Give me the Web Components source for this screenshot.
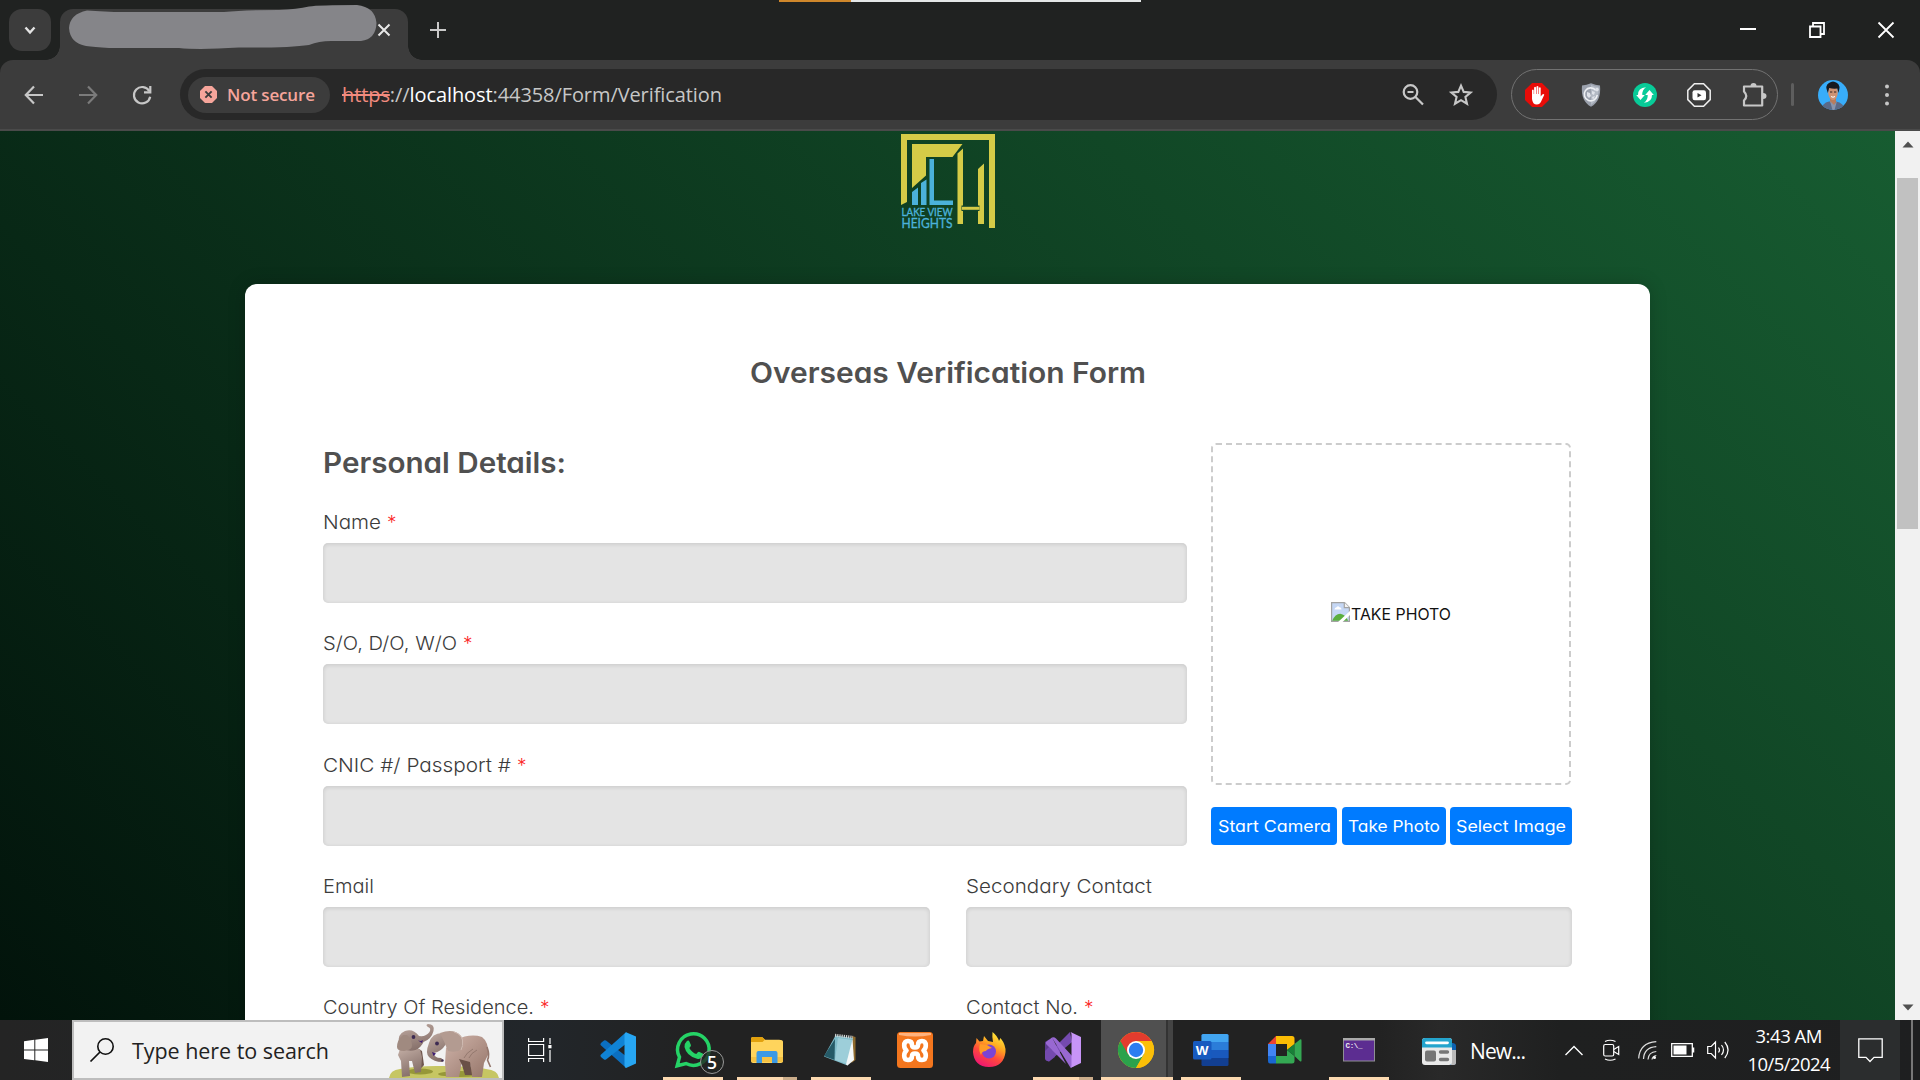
<!DOCTYPE html>
<html lang="en">
<head>
<meta charset="utf-8">
<title>Overseas Verification Form</title>
<style>
html,body{margin:0;padding:0}
body{width:1920px;height:1080px;overflow:hidden;background:#202221}
</style>
</head>
<body>
<desktop-screen></desktop-screen>
<script>
const ICONS = {
chevron:['24 24','<path d="M7.500 9.500l4.500 5 4.500-5" fill="none" stroke="#e3e3e3" stroke-width="2.400"/>'],
x:['14 14','<path d="M1.500 1.500l11 11M12.500 1.500l-11 11" stroke="#e8e8e8" stroke-width="2"/>'],
plus:['16 16','<path d="M8 0v16M0 8h16" stroke="#c9c9c9" stroke-width="2"/>'],
min:['16 16','<path d="M0 7h16" stroke="#fff" stroke-width="2"/>'],
restore:['16 16','<path d="M1 4.500h10.500V15H1zM4 4V1h11v11h-3" fill="none" stroke="#fff" stroke-width="1.800"/>'],
close:['16 16','<path d="M.5.5l15 15M15.500.5l-15 15" stroke="#fff" stroke-width="1.800"/>'],
back:['20 20','<path d="M10 1.500L1.800 10l8.200 8.500M2 10h17" fill="none" stroke="#c7c7c7" stroke-width="2.200"/>'],
fwd:['20 20','<path d="M10 1.500l8.200 8.500-8.200 8.500M18 10H1" fill="none" stroke="#7b7b7b" stroke-width="2.200"/>'],
reload:['20 20','<path d="M17.300 6.200A8.200 8.200 0 1 0 18.200 11.800" fill="none" stroke="#c7c7c7" stroke-width="2.200"/><path d="M18.300 1v6.300H12" fill="none" stroke="#c7c7c7" stroke-width="2.200"/>'],
danger:['18 18','<path d="M5.300 0h7.400L18 5.300v7.400L12.700 18H5.300L0 12.700V5.300z" fill="#f6a59b"/><path d="M5.700 5.700l6.600 6.600M12.300 5.700l-6.600 6.600" stroke="#3c3c3c" stroke-width="2"/>'],
zoomout:['22 22','<circle cx="8.500" cy="8" r="6.800" fill="none" stroke="#c7c7c7" stroke-width="2.200"/><path d="M5.500 8h6M13.500 13l7.500 7.500" stroke="#c7c7c7" stroke-width="2.200"/>'],
star:['24 24','<path d="M12 2.600l2.700 6.300 6.900.6-5.200 4.500 1.600 6.700-6-3.600-6 3.600L7.600 14 2.400 9.500l6.900-.6z" fill="none" stroke="#c7c7c7" stroke-width="2.100"/>'],
adblock:['24 24','<path d="M7.100 0h9.800L24 7.100v9.800L16.900 24H7.100L0 16.900V7.100z" fill="#e80c08"/><path d="M7 13V7.200q1-1.200 1.700 0V11l.4.1V4.400q1-1.200 1.900 0V11h.5V3.600q1-1.200 1.900 0V11h.5V4.800q1-1.100 1.800 0V13.500l1.600-2q1.300-1 2 0.200L16.800 17q-1.600 4.500-5 4.500Q7.600 21.500 7 16z" fill="#fff"/>'],
shield:['24 24','<path d="M12 .3q4.500 2 9 2.200Q22.500 18 12 23.800 1.500 18 3 2.500 7.500 2.300 12 .3z" fill="#9ba1ad"/><path d="M12 1.800q4 1.800 7.700 2Q20.500 17 12 22z" fill="#b4bac5"/><path d="M16.700 7.200A6.500 6.500 0 1 0 18.200 12" fill="none" stroke="#eef0f4" stroke-width="1.600"/><circle cx="18" cy="6.600" r="1.800" fill="#dfe2e9"/><path d="M8 9l3 1 1 3-2 2-2-2zM13 8l3 1-1 3-2-1zM13 14l3-1-2 4z" fill="#dfe2e9"/>'],
sync:['24 24','<circle cx="12" cy="12" r="12" fill="#08cb98"/><path d="M13 4.300Q4.800 5 5 12H3.200l4.300 5 4.300-5H9.300Q9 7 13 4.300zM11 19.700Q19.200 19 19 12h1.800l-4.300-5-4.300 5h2.500q.3 5-3.700 7.700z" fill="#fff"/>'],
ytblock:['24 24','<path d="M7.400.8h9.200l6.600 6.600v9.200l-6.600 6.600H7.400L.8 16.600V7.400z" fill="none" stroke="#efefef" stroke-width="1.500"/><rect x="5.500" y="7.300" width="13.500" height="10" rx="2.200" fill="#fff"/><path d="M10.500 10l4 2.300-4 2.300z" fill="#333"/>'],
puzzle:['26 26','<path d="M3 4.500h18.200v19H3v-5q4.500-4.500 0-9z" fill="none" stroke="#c7c7c7" stroke-width="2.200" stroke-linejoin="round"/><path d="M9.500 4q0-3 3-3t3 3zM22 11q3.500 0 3.500 3t-3.500 3z" fill="#c7c7c7"/>'],
avatar:['30 30','<clipPath id="a"><circle cx="15" cy="15" r="15"/></clipPath><g clip-path="url(#a)"><path d="M0 0h30v30H0z" fill="#38adfa"/><path d="M3 30q1-7 8-8.500h7q8 1.500 9 8.500z" fill="#5b6a88"/><path d="M12 16h6v6l-2 4-4-4z" fill="#b97d5e"/><path d="M12 21l2.500 9h2l2.500-9-3 4z" fill="#8995ad"/><ellipse cx="15" cy="12.500" rx="4.800" ry="7.500" fill="#cf9373"/><path d="M9.800 13Q6.500 5 11 3q4-3 8 0 4 2 1.400 10l-1-4.500q-4.500.5-8.200-.5z" fill="#171a20"/><path d="M12 12h2.300m1.700 0h2.300" stroke="#35231e"/><path d="M13 16.500q2 1.500 4 0" stroke="#fff" fill="none"/></g>'],
dots:['4 22','<g fill="#c7c7c7"><circle cx="2" cy="2.500" r="2"/><circle cx="2" cy="11" r="2"/><circle cx="2" cy="19.500" r="2"/></g>'],
logo:['94 95','<g fill="#d5cb47"><path d="M0 0h94v94h-6V6H6v62l-6 3z"/><path d="M11 10h50.500l-10 13H25v18.500L11 54z"/><path d="M56.500 19.500l5.500-5V90h-5.500zM77 35l6-5.500V90h-6z"/></g><path d="M60.500 71.500h18v5.500h-18z" fill="#10442a"/><path d="M61 72.800h17.500v3H61z" fill="#d5cb47"/><g fill="#4bb1da"><path d="M11 58l6-4.500V71h-6zM20 49l5.500-3.500V71H20zM28.500 25H33v41.500h19V71H28.500z"/><g font-family="Lato" stroke="#4bb1da" stroke-width=".35"><text x=".5" y="82" font-size="11" textLength="51" lengthAdjust="spacingAndGlyphs">LAKE VIEW</text><text x=".5" y="94.200" font-size="14" textLength="51" lengthAdjust="spacingAndGlyphs">HEIGHTS</text></g></g>'],
broken:['19 20','<path d="M.6.6h13l4.800 4.800V19.400H.6z" fill="#c5d7f5" stroke="#a3a3a3" stroke-width="1.200"/><path d="M13.300.6v5h5" fill="#f4f4f4" stroke="#a3a3a3" stroke-width="1.200"/><path d="M3.500 7.500q0-2 2-2.200 1.500-2 3 0 2 0 2 2.200z" fill="#fff"/><path d="M1.200 18.800q3-7 8-7 5 .5 8 7z" fill="#5aae3e"/><path d="M6.500 20.500L19.500 8.500v4L11 20.500z" fill="#fff"/>'],
up:['12 7','<path d="M6 .5L11.500 6.500H.5z" fill="#505050"/>'],
down:['12 7','<path d="M6 6.500L.5.5h11z" fill="#505050"/>'],
start:['24 24','<path d="M0 3.300L10.300 1.800V11.500H0zM11.300 1.700L24 0v11.500H11.300zM0 12.500h10.300v9.800L0 21zM11.300 12.500H24V24l-12.700-1.700z" fill="#fff"/>'],
search:['24 24','<circle cx="15.500" cy="8.500" r="7.700" fill="none" stroke="#111" stroke-width="1.600"/><path d="M10 14L.5 23.500" stroke="#111" stroke-width="1.700"/>'],
elephants:['116 56','<defs><linearGradient id="e" x2=".4" y2="1"><stop stop-color="#c2ada4"/><stop offset="1" stop-color="#86706a"/></linearGradient><linearGradient id="f" y2="1"><stop stop-color="#d0b4aa"/><stop offset="1" stop-color="#957569"/></linearGradient></defs><path d="M3 56q1-8 11-9 18-3.500 42-3 30 0 44 3 12 1 13 9z" fill="#c6c663"/><ellipse cx="34" cy="49.500" rx="13" ry="3" fill="#969739"/><ellipse cx="74" cy="52" rx="22" ry="3" fill="#969739"/><path d="M31 26l5 3 2 14-2.500 3-3.500-6z" fill="#6f574e"/><path d="M14 27l20 0 2 8-1 15-6 1-3-12-3 0 1 15-8 1-1-16-3-6z" fill="url(#e)"/><path d="M13 22Q11 12 19 9q8-3 14 5 7 1 10.500-4 2-4-1.500-5-3-2 0-3 7 0 5.500 7-2 8-10 11-2 5-8 8-10 3-16.500-6z" fill="url(#e)"/><path d="M17 13q-6 5-6 12 0 4 7 4 8-1 8-5 0-7-5-11z" fill="#a08a80"/><path d="M70 18q14-7 26-3 7 5 6 18l-4 8-2 14H86l-2-13-8-2-3 15H60l-1-14 1-15z" fill="url(#f)"/><path d="M73 37l11 3 2 13h-7l-3-10z" fill="#6a5047"/><path d="M101 25q3 8 .5 13l3 7" fill="none" stroke="#93766c" stroke-width="1.600"/><path d="M56 11Q46 11 43 21q-4 10 0 14 5 5 13 5 2-2-1-4-7 0-7-5 7-1 12-9z" fill="url(#e)"/><path d="M54 11Q68 6 75 14q4 9 1 13-5 4-14 2-4-10-8-18z" fill="#b39b91"/><path d="M68 10q7 2 8.500 8 1 6-1.500 10" fill="none" stroke="#d0bbb2"/><circle cx="27.500" cy="15" r="1.900" fill="#3d2b52"/><circle cx="51" cy="21.500" r="1.900" fill="#3d2b52"/><path d="M32 18.500q3 1 5-.5l-1 3zM46 30l4 1.500-2.500 2.500z" fill="#3e1d73"/><circle cx="56.500" cy="38.500" r="1.200" fill="#3d2b52"/><path d="M87 27q-7 4-9 9M91 28q-6 3-8 8" fill="none" stroke="#8c7167" stroke-width=".8"/>'],
taskview:['24 24','<g fill="none" stroke="#fff" stroke-width="1.200"><path d="M.6 0v3.500h15V0M.6 6.500h15v11H.6zM.6 24v-3.500h15V24M22 0v6M22 12v12"/></g><path d="M20.300 7h3.200v3.300h-3.200z" fill="#fff"/>'],
vscode:['36 36','<path d="M1.500 10.500L4 8.400q1-.6 2 .2L27 25v10.500l-3-1.500L.8 13.200q-1.300-1.200.7-2.700z" fill="#0b6fc0"/><path d="M1.500 25.500L4 27.600q1 .6 2-.2L27 11V.5l-3 1.500L.8 22.800q-1.300 1.200.7 2.700z" fill="#1083d4"/><path d="M26 .2L36 4.500v27L26 35.900q-1.500-.3-1.500-2.400v-31Q24.500.4 26 .2z" fill="#27a6f3"/>'],
whatsapp:['36 36','<path d="M2.200 33.800l2.300-8.700A15.800 15.800 0 1 1 11 31.500z" fill="none" stroke="#25d366" stroke-width="3.500"/><path d="M11.500 9.500q2-2 3 .2l1.500 3.500q0 1-1.700 2.800 2.700 4.700 7 6 1.800-2.300 2.700-2.200l4 2q1.200.6.300 2.500-2 3.400-6.300 2.500Q11.500 24 9.500 15q-.2-3.500 2-5.500z" fill="#25d366"/>'],
explorer:['36 36','<path d="M2 7q0-2 2-2h9l3 2.700h14q4 0 4 2V29q0 2-2 2H4q-2 0-2-2z" fill="#ffd45c"/><path d="M2 7q0-2 2-2h9l3 2.500L13.500 10H2z" fill="#e2a10d"/><path d="M2 25h32v5H4q-2 0-2-2z" fill="#f5c243"/><path d="M7.500 31V21q0-2 2-2h17q2 0 2 2v10h-5.500v-6H13v6z" fill="#3a99e4"/>'],
notepad:['36 36','<path d="M29 4l3.500 1v23l-4 3z" fill="#8f6a2c"/><path d="M12.500 3.500L30 6 24.500 33.500 1 24.500z" fill="#80bcca"/><path d="M12 7L1 24l10.500 4z" fill="#255a67"/><path d="M15 6L29 8l-4.500 24L12 28z" fill="#a4d2dc" opacity=".8"/><path d="M23 32.500L29.500 7l1.500 21-6.500 5.500z" fill="#f5f8f8"/><path d="M12 3.300l18 2" stroke="#cfd4d4" stroke-width="3" stroke-dasharray="1.200 1"/>'],
xampp:['36 36','<rect width="36" height="36" rx="3.500" fill="#f4761e"/><path d="M2 1h32v2q-16 3-32 0z" fill="#ffb27e"/><path d="M7.200 13.500Q7.200 9 11 9q4 0 4 4 0 2.500 3 2.500t3-2.500q0-4 4-4 3.800 0 3.800 4.500 0 3-2.300 5 2.300 2 2.300 5 0 4.500-3.800 4.500-4 0-4-4 0-2.500-3-2.500t-3 2.500q0 4-4 4-3.800 0-3.800-4.500 0-3 2.300-5-2.300-2-2.300-5z" fill="none" stroke="#fff" stroke-width="4.600" stroke-linejoin="round"/>'],
firefox:['36 36','<defs><linearGradient id="ff" x1=".8" y1="0" x2=".3" y2="1"><stop stop-color="#fff43f"/><stop offset=".38" stop-color="#ffa51f"/><stop offset=".65" stop-color="#ff4a3b"/><stop offset="1" stop-color="#ef1573"/></linearGradient></defs><path d="M21.500 0q5 4 6.500 9l1.500-3Q35 13 34.500 20 33 34.500 18 35 3 34.500 2 20q0-6 3-9l.5-5 3 3.500L12 9l1-5 4 5 5 1q-1-6-.5-10z" fill="url(#ff)"/><circle cx="18" cy="19.500" r="7" fill="#7b44d5"/><path d="M9 12l7 1 5 3q-5 1-6 3-4 0-5 4-3-5-1-11z" fill="#ff9b26"/>'],
vs:['36 36','<path d="M0 10l4-2.500 6 4.500v13l-6 4.500L0 27z" fill="#5d3b91"/><path d="M25 0L7 18 4 15 0 19v7q0 3 4 3.500L27 10z" fill="#744aaf"/><path d="M7 5.500L25.500 35.800 29 34V26L11 6.500Q9 4.500 7 5.500L1 10v2l20 20z" fill="#9868d2"/><path d="M25.500 0L36 5v26l-10.500 5q1-1 1-3V2.500q0-1.500-1-2.500z" fill="#c794f7"/>'],
chrome:['36 36','<circle cx="18" cy="18" r="18" fill="#fbbf08"/><path d="M18 18L2.400 9A18 18 0 0 0 18 36l8-14z" fill="#2ba24c"/><path d="M2.400 9A18 18 0 0 1 33.600 9H18l-7.800 13.500z" fill="#e33c2e"/><path d="M18 9h15.600A18 18 0 0 1 18 36l7.800-13.500z" fill="#fbbf08"/><circle cx="18" cy="18" r="9" fill="#fff"/><circle cx="18" cy="18" r="7.200" fill="#2c7df0"/>'],
word:['36 36','<rect x="8.500" y="2" width="27" height="32" rx="1.500" fill="#123f91"/><path d="M8.500 3.500Q8.500 2 10 2h24q1.500 0 1.500 1.500V10h-27z" fill="#42a5f0"/><path d="M8.500 10h27v8h-27z" fill="#2b7dd9"/><path d="M8.500 18h27v8h-27z" fill="#1959bd"/><rect x="0" y="9" width="18.500" height="18.500" rx="1.500" fill="#175abf"/><text x="9.200" y="23" text-anchor="middle" font-family="Liberation Sans" font-weight="700" font-size="13.500" fill="#fff">W</text>'],
meet:['36 36','<path d="M1 12L9 4v8z" fill="#ea4335"/><path d="M9 4h16q2.500 0 2.500 2.500V12L20 18v-6H9z" fill="#fbbc04"/><path d="M1 12h8v12H1z" fill="#4285f4"/><path d="M1 24h8v7.500H3Q1 31.500 1 29z" fill="#1967d2"/><path d="M9 24h11v-6l7.500 6v5q0 2.500-2.500 2.500H9z" fill="#34a853"/><path d="M20 18l7.500-6v12z" fill="#188038"/><path d="M27.500 12l5.500-4.500q1.500-.7 1.500 1v20q0 1.500-1.500.7L27.500 24z" fill="#34a853"/>'],
cmd:['36 36','<rect x="2.500" y="6.500" width="31" height="22.500" fill="#5c2d91" stroke="#8f8f94"/><path d="M2 6h32v2.500H2z" fill="#aaa"/><text x="4.500" y="16" font-family="Liberation Mono" font-weight="700" font-size="7.500" textLength="17" fill="#eee">C:\\_</text>'],
news:['34 27','<path d="M28 5h3q3 .5 3 3v17q-1 2-3 2h-3z" fill="#0e62b1"/><path d="M30 12h4v13q0 2-3 2h-2z" fill="#b9b9b9"/><rect width="30" height="27" rx="3" fill="#e9e9e9"/><path d="M0 9.500V3q0-3 3-3h24q3 0 3 3v6.500z" fill="#24a4cd"/><path d="M4.500 4.800h21" stroke="#fff" stroke-width="2.800" stroke-linecap="round"/><rect x="3" y="12.500" width="11" height="11" rx="2" fill="#767676"/><path d="M18.500 14h7M18.500 21.500h7" stroke="#767676" stroke-width="3.400" stroke-linecap="round"/>'],
tchev:['18 11','<path d="M.5 10L9 1.500l8.500 8.500" fill="none" stroke="#fff" stroke-width="1.400"/>'],
meetnow:['17 22','<g fill="none" stroke="#fff" stroke-width="1.200"><rect x=".7" y="5.500" width="10" height="11.500" rx="1.500"/><path d="M10.700 10.500l5-3v8l-5-3M2 2.500Q7 0 12.500 2.500M2 20q5 2.500 10.500 0"/></g>'],
wifi:['19 19','<g fill="none" stroke="#ddd" stroke-width="1.200"><path d="M.7 17.500Q1.500 2 18.300.7M5.500 18Q6 6.500 18.300 5.700M10 18.500q.5-7.500 8.300-8M14 18.500q.5-3.500 4.300-4"/></g><circle cx="16.500" cy="16.500" r="1.500" fill="#fff"/>'],
battery:['24 14','<path d="M.7.700h20.600v12.600H.7zM22.600 4.500v5" fill="none" stroke="#fff" stroke-width="1.300"/><path d="M2.500 2.500h13v9h-13z" fill="#fff"/>'],
speaker:['23 18','<g fill="none" stroke="#fff" stroke-width="1.200"><path d="M.7 5.500h3.500L8.500 1v16L4.200 12.500H.7zM11.500 6.500q2 2.500 0 5M14.500 4q4 5 0 10M17.800 1q6.500 8 0 16"/></g>'],
action:['25 25','<path d="M.8.800h23.400v18.500h-8.200l-4 4.200-4-4.200H.8z" fill="none" stroke="#fff" stroke-width="1.300"/>']
};
function component(name, html, setup){
  const t = document.createElement('template');
  t.innerHTML = html;
  customElements.define(name, class extends HTMLElement{
    constructor(){ super(); this.attachShadow({mode:'open'}).append(t.content.cloneNode(true)); }
    connectedCallback(){ if(setup) setup(this, this.shadowRoot); }
  });
}

component('desktop-screen', `<style>:host{display:flex;flex-direction:column;width:1920px;height:1080px;overflow:hidden;font-family:"Open Sans","Liberation Sans",sans-serif}</style>
<browser-tabs></browser-tabs><browser-toolbar></browser-toolbar><page-view></page-view><task-bar></task-bar>`);

component('browser-tabs', `<style>
:host{display:flex;height:60px;background:#202221;position:relative}
.drop{margin:9px 9px 0;width:42px;height:42px;border-radius:13px;background:#3c3c3c;display:grid;place-items:center}
.tab{position:relative;margin-top:9px;width:348px;height:51px;background:#3c3c3c;border-radius:13px 13px 0 0;display:flex;align-items:center;padding-bottom:9px;box-sizing:border-box}
.tab:before,.tab:after{content:"";position:absolute;bottom:0;width:14px;height:14px;background:radial-gradient(circle at 0 0,transparent 13.5px,#3c3c3c 14px);left:-14px}
.tab:after{left:auto;right:-14px;background:radial-gradient(circle at 100% 0,transparent 13.5px,#3c3c3c 14px)}
.blob{position:absolute;left:9px;top:-4px}
.x{margin-left:317px}
.plus{margin:22px 0 0 22px}
.win{margin-left:auto;display:flex;gap:53px;padding:22px 26px 0 0}
.strip{position:absolute;left:779px;top:0;width:362px;height:2px;background:linear-gradient(90deg,#cf872b 72px,#e4e7e7 72px)}
</style>
<div class="drop"><ui-icon name="chevron" w="24" h="24"></ui-icon></div>
<div class="tab"><svg class="blob" width="308" height="44" viewBox="0 0 308 44"><path d="M18 5.500Q30 6 45 7H155Q175 5 210 5 228 4 240 1.500 250 0 288 0 306 2 307.500 18 307 34 292 36H262Q250 36 240 40 220 43 170 42.500 130 45 110 43H40Q25 42 17 41 1 38 0 23 1 9 18 5.500z" fill="#858589"/></svg><ui-icon class="x" name="x" w="14" h="14"></ui-icon></div>
<ui-icon class="plus" name="plus" w="16" h="16"></ui-icon>
<div class="win"><ui-icon name="min" w="16" h="16"></ui-icon><ui-icon name="restore" w="16" h="16"></ui-icon><ui-icon name="close" w="16" h="16"></ui-icon></div><div class="strip"></div>`);

component('browser-toolbar', `<style>
:host{display:block;height:71px;background:#202221}
.bar{display:flex;align-items:center;height:71px;box-sizing:border-box;padding:0 31px 0 23px;background:#3c3c3c;border-radius:13px 13px 0 0;border-bottom:2px solid #4a4a4a}
.nav{display:flex;gap:34px;width:156px;padding-left:1px}
.omni{display:flex;align-items:center;width:1317px;height:51px;border-radius:26px;background:#282828;box-sizing:border-box;padding:0 24px 0 8px}
.chip{display:flex;align-items:center;gap:10px;width:142px;height:36px;border-radius:18px;background:#3c3c3c;box-sizing:border-box;padding-left:12px;color:#f6a59b;font-size:17px;font-weight:600}
.url{margin-left:12px;font-size:20px;color:#c7c7c7}
s{color:#f28b7f;text-decoration-thickness:1.500px}b{font-weight:400;color:#fff}
.acts{margin-left:auto;display:flex;gap:25px;align-items:center}
.ext{margin-left:14px;display:flex;align-items:center;gap:30px;width:267px;height:51px;box-sizing:border-box;border:1.500px solid #727272;border-radius:26px;padding-left:12.500px}
.sep{width:3px;height:23px;background:#5e5e5e;border-radius:2px;margin:0 24px 0 13px}
.dots{margin-left:auto}
</style><div class="bar"><div class="nav"><ui-icon name="back" w="20" h="20"></ui-icon><ui-icon name="fwd" w="20" h="20"></ui-icon><ui-icon name="reload" w="20" h="20"></ui-icon></div>
<div class="omni"><div class="chip"><ui-icon name="danger" w="17" h="17"></ui-icon><fit-text w="88">Not secure</fit-text></div><div class="url"><fit-text w="380"><s>https</s>://<b>localhost</b>:44358/Form/Verification</fit-text></div><div class="acts"><ui-icon name="zoomout" w="22" h="22"></ui-icon><ui-icon name="star" w="24" h="24"></ui-icon></div></div>
<div class="ext"><ui-icon name="adblock" w="24" h="24"></ui-icon><ui-icon name="shield" w="24" h="24"></ui-icon><ui-icon name="sync" w="24" h="24"></ui-icon><ui-icon name="ytblock" w="24" h="24"></ui-icon><ui-icon name="puzzle" w="26" h="26"></ui-icon></div>
<div class="sep"></div><ui-icon name="avatar" w="30" h="30"></ui-icon><ui-icon class="dots" name="dots" w="4" h="22"></ui-icon></div>`);

component('page-view', `<style>
:host{display:flex;height:889px;overflow:hidden}
.page{width:1895px;height:889px;background:linear-gradient(45deg,#02130b,#175c31);display:flex;flex-direction:column;align-items:center;overflow:hidden;font-family:Inter,"Liberation Sans",sans-serif;font-feature-settings:"cv11"}
.logo{margin:3px 0 0 1px;flex:none}
.scroll{width:25px;height:889px;background:#f1f1f1;display:flex;flex-direction:column;align-items:center;box-sizing:border-box;padding:10px 0 9px}
.thumb{width:21px;height:351px;background:#c1c1c1;margin-top:30px}
.dn{margin-top:auto}
</style><div class="page"><ui-icon class="logo" name="logo" w="94" h="95"></ui-icon><verification-form></verification-form></div>
<div class="scroll"><ui-icon name="up" w="12" h="7"></ui-icon><div class="thumb"></div><ui-icon class="dn" name="down" w="12" h="7"></ui-icon></div>`);

component('verification-form', `<style>
:host{display:block;flex:none;margin-top:55px;width:1405px;height:1100px;box-sizing:border-box;background:#fff;border-radius:12px;padding:69px 78px 0;box-shadow:0 0 18px rgba(0,0,0,.18)}
h1,h2{margin:0;height:40px;line-height:41px;font-weight:600;color:#505050}
h1{font-size:28px;text-align:center}h2{font-size:28px;margin-bottom:23px}
.top{display:flex;gap:24px;margin-top:50px}
.left{width:864px}.stack{display:grid;row-gap:24.300px}
.right{width:361px}
.photo{width:360px;height:342px;box-sizing:border-box;border:2px dashed #ccc;border-radius:5px;display:flex;align-items:center;justify-content:center;font-size:16.500px;color:#111}
.photo ui-icon{margin:-5px 1px 0 -1px}
.photo fit-text{line-height:24px}
.btns{margin-top:22px;display:flex;gap:4.500px}
.two{display:grid;grid-template-columns:607px 606px;gap:24.300px 36px;margin-top:24.300px}
</style><h1><fit-text stretch w="396">Overseas Verification Form</fit-text></h1>
<div class="top"><div class="left"><h2><fit-text stretch w="243">Personal Details:</fit-text></h2><div class="stack"><form-field label="Name" w="58" req></form-field><form-field label="S/O, D/O, W/O" w="134" req></form-field><form-field label="CNIC #/ Passport #" w="188" req></form-field></div></div>
<div class="right"><div class="photo"><ui-icon name="broken" w="19" h="20"></ui-icon><fit-text stretch w="100">TAKE PHOTO</fit-text></div><div class="btns"><action-button bw="126" w="113">Start Camera</action-button><action-button bw="104" w="92">Take Photo</action-button><action-button bw="122" w="110">Select Image</action-button></div></div></div>
<div class="two"><form-field label="Email" w="51"></form-field><form-field label="Secondary Contact" w="186"></form-field><form-field label="Country Of Residence." w="211" req></form-field><form-field label="Contact No." w="112" req></form-field></div>`);

component('form-field', `<style>
:host{display:block;height:97px}
label{display:flex;height:32px;line-height:33px;font-size:19px;font-weight:300;color:#3c3c3c;margin-bottom:5px}
i{font-style:normal;color:#fb2a2a;margin-left:6px;font-weight:300}
.box{height:60px;background:#e4e4e4;border-radius:5px;box-shadow:inset 0 1px 4px rgba(0,0,0,.13)}
</style><label></label><div class="box"></div>`, (h,r)=>{
  r.querySelector('label').innerHTML = `<fit-text stretch w="${h.getAttribute('w')}">${h.getAttribute('label')}</fit-text>` + (h.hasAttribute('req')?'<i>*</i>':'');
});

component('action-button', `<style>:host{display:flex;height:38px;border-radius:4px;background:#007bff;color:#fff;font-size:16.500px;align-items:center;justify-content:center;line-height:38px}</style><fit-text stretch><slot></slot></fit-text>`, (h,r)=>{
  h.style.width = h.getAttribute('bw')+'px';
  r.querySelector('fit-text').setAttribute('w', h.getAttribute('w'));
});

component('task-bar', `<style>
:host{display:flex;height:60px;background:linear-gradient(90deg,#242424 0,#22262a 540px,#222 700px,#222 1380px,#292929 1440px,#1f2020 1560px,#1e1f20);color:#fff}
.start{width:72px;display:grid;place-items:center}
.search{width:432px;height:60px;box-sizing:border-box;border:2px solid #bdbdbd;background:#f2f2f2;display:flex;align-items:center;padding-left:16px;color:#222;font-size:21.500px}
.search fit-text{margin-left:18px;line-height:56px;padding-top:2px}
.el{margin-left:auto;align-self:flex-end}
.tv{width:72px;display:grid;place-items:center;margin-right:12px}
.apps{display:flex;gap:14px}
.news{display:flex;align-items:center;gap:14px;margin-left:33px;font-size:21px;width:106px;padding-top:2px}
.tray{display:flex;align-items:center;margin-left:37px}
.clock{width:84px;margin-left:17px;text-align:center;font-size:18.500px;line-height:28px;padding-top:2px}
.action{width:60px;margin-left:9px;background:#2b2d2e;display:grid;place-items:center}
.edge{margin-left:11px;width:2px;background:#777}
</style><div class="start"><ui-icon name="start" w="24" h="24"></ui-icon></div>
<div class="search"><ui-icon name="search" w="24" h="24"></ui-icon><fit-text w="197">Type here to search</fit-text><ui-icon class="el" name="elephants" w="116" h="56"></ui-icon></div>
<div class="tv"><ui-icon name="taskview" w="24" h="24"></ui-icon></div>
<div class="apps"><task-app name="vscode" style="margin-right:1px"></task-app><task-app name="whatsapp" run badge="5"></task-app><task-app name="explorer" run multi></task-app><task-app name="notepad" run></task-app><task-app name="xampp"></task-app><task-app name="firefox"></task-app><task-app name="vs" run multi></task-app><task-app name="chrome" run active></task-app><task-app name="word" run></task-app><task-app name="meet"></task-app><task-app name="cmd" run></task-app></div>
<div class="news"><ui-icon name="news" w="34" h="27"></ui-icon><fit-text w="56">New...</fit-text></div>
<div class="tray"><ui-icon name="tchev" w="18" h="11"></ui-icon><ui-icon name="meetnow" w="17" h="22" style="margin-left:20px"></ui-icon><ui-icon name="wifi" w="19" h="19" style="margin-left:18px"></ui-icon><ui-icon name="battery" w="24" h="14" style="margin-left:14px"></ui-icon><ui-icon name="speaker" w="23" h="18" style="margin-left:12px"></ui-icon></div>
<div class="clock"><fit-text w="67">3:43 AM</fit-text><br><fit-text w="83">10/5/2024</fit-text></div>
<div class="action"><ui-icon name="action" w="25" h="25"></ui-icon></div><div class="edge"></div>`);

component('task-app', `<style>
:host{position:relative;display:grid;place-items:center;width:60px;height:60px}
:host([active]){width:72px;margin:0 -6px;background:linear-gradient(90deg,#505050 65px,#333 65px,#333 67px,#444 67px);box-sizing:border-box;padding-right:2px}
:host([run]):after{content:"";position:absolute;left:0;right:0;bottom:0;height:3px;background:#fcd9b0}
:host([multi]):after{background:linear-gradient(90deg,#fcd9b0 46px,#cbad8b 46px)}
span{display:none}
:host([badge]) span{position:absolute;left:37px;top:30px;width:22px;height:22px;border:1px solid #999;border-radius:50%;background:rgba(34,37,35,.78);display:grid;place-items:center;font-size:17.500px;line-height:22px;font-weight:600;color:#fff}
</style><ui-icon w="36" h="36"></ui-icon>`, (h,r)=>{
  r.querySelector('ui-icon').setAttribute('name', h.getAttribute('name'));
  if(h.hasAttribute('badge')){ const s=document.createElement('span'); s.textContent=h.getAttribute('badge'); r.append(s); }
});

component('ui-icon', `<style>:host{display:block;flex:none;line-height:0}svg{display:block;overflow:visible}</style>`, (h,r)=>{
  const [box,body] = ICONS[h.getAttribute('name')];
  const w=h.getAttribute('w'), y=h.getAttribute('h');
  h.style.width=w+'px'; h.style.height=y+'px';
  const holder=document.createElement('div');
  holder.innerHTML=`<svg width="${w}" height="${y}" viewBox="0 0 ${box}">${body}</svg>`;
  r.append(holder);
});

/* Makes a line take the width given in the w attribute: by letter spacing, or by wider glyphs when "stretch" is set. */
component('fit-text', `<style>:host{display:inline-block;white-space:nowrap;text-align:left}span{display:inline-block;transform-origin:0 50%}</style><span><slot></slot></span>`, (h,r)=>{
  const host = h.getRootNode().host;
  const text = h.textContent.trim() || (host ? host.textContent.trim() : '');
  const natural = h.getBoundingClientRect().width;
  const want = parseFloat(h.getAttribute('w'));
  if(h.hasAttribute('stretch')){
    h.style.width = want + 'px';
    r.querySelector('span').style.transform = `scaleX(${want / natural})`;
    return;
  }
  const gap = (want - natural) / Math.max(1, text.length - 1);
  h.style.letterSpacing = gap + 'px';
  h.style.marginRight = -gap + 'px';
});
</script>
</body>
</html>
